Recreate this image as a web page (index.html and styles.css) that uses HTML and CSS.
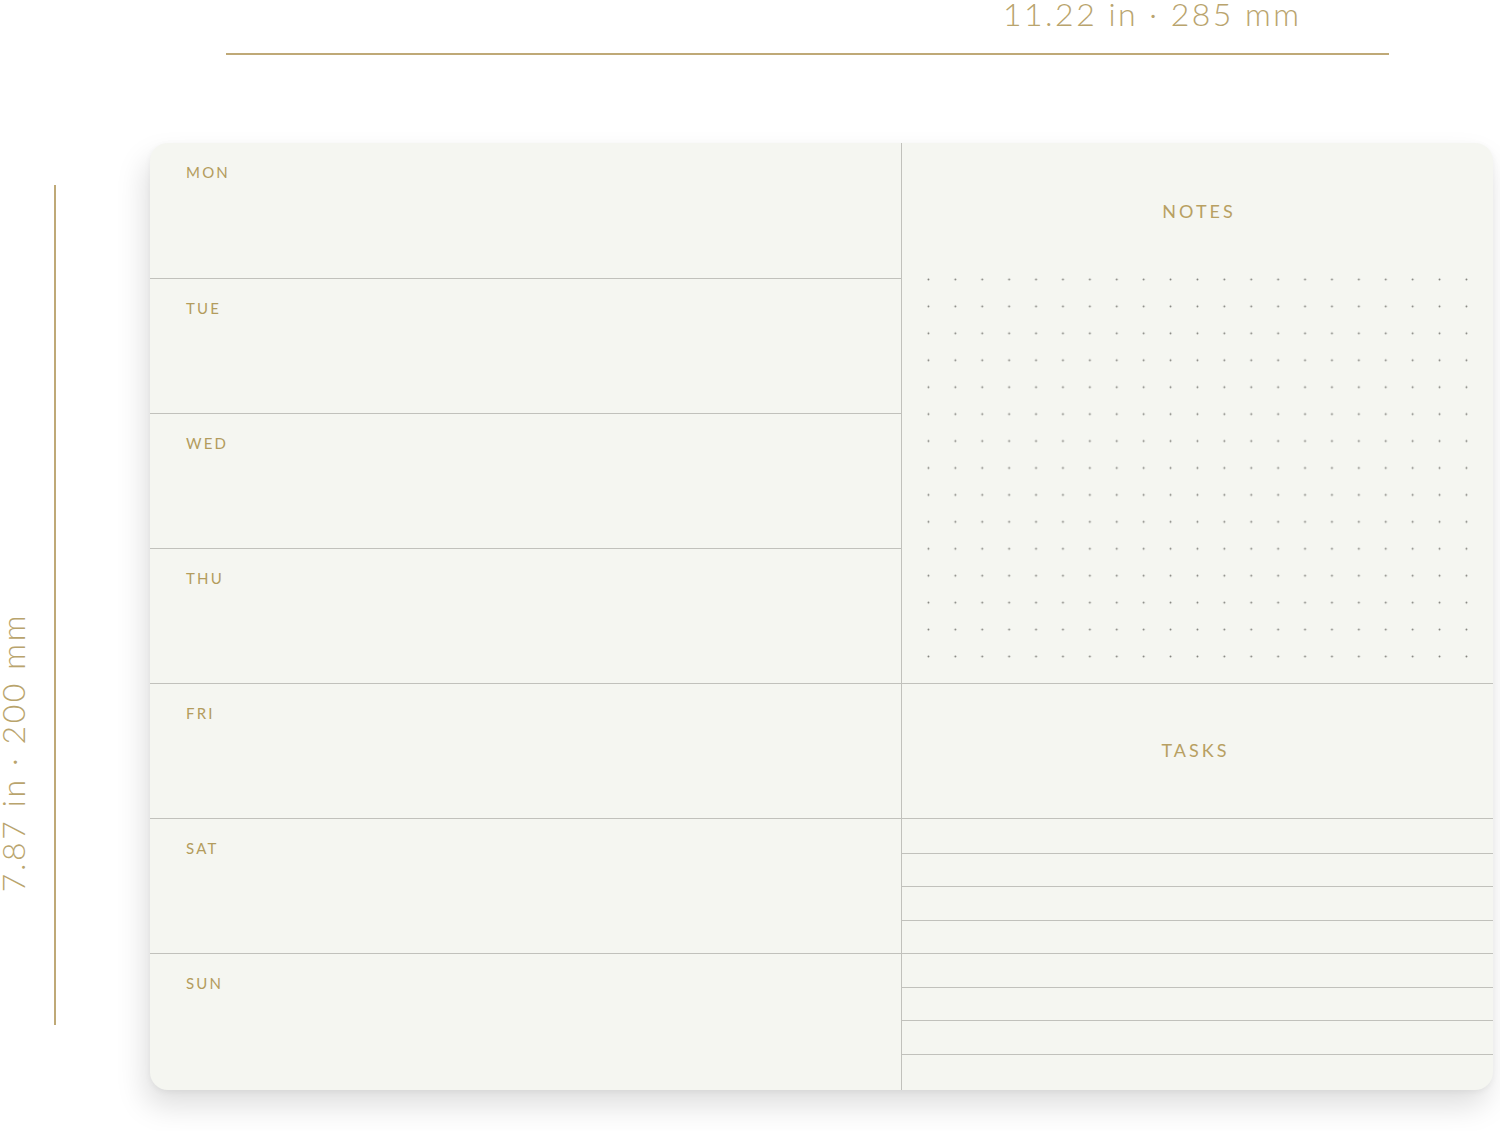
FILE: index.html
```html
<!DOCTYPE html>
<html lang="en">
<head>
<meta charset="utf-8">
<title>Weekly planner</title>
<link rel="stylesheet" href="styles.css">
</head>
<body>
<div class="page">
  <header class="header">
    <div class="dim-top">11.22 in · 285 mm</div>
    <div class="dim-top-line"></div>
  </header>
  <div class="main">
    <div class="side">
      <div class="dim-left">7.87 in · 200 mm</div>
      <div class="dim-left-line"></div>
    </div>
    <div class="card">
      <div class="day r1"><span class="day-label">MON</span></div>
      <div class="day r2"><span class="day-label">TUE</span></div>
      <div class="day r3"><span class="day-label">WED</span></div>
      <div class="day r4"><span class="day-label">THU</span></div>
      <div class="day r5"><span class="day-label">FRI</span></div>
      <div class="day r6"><span class="day-label">SAT</span></div>
      <div class="day r7"><span class="day-label">SUN</span></div>
      <section class="notes">
        <div class="section-label notes-label">NOTES</div>
        <svg class="dots" width="565" height="404" viewBox="0 0 565 404" aria-hidden="true">
          <defs>
            <pattern id="dotgrid" x="0" y="0" width="26.9" height="26.93" patternUnits="userSpaceOnUse">
              <circle cx="13.45" cy="13.46" r="0.95" fill="#7e7e79"/>
            </pattern>
          </defs>
          <rect width="565" height="404" fill="url(#dotgrid)"/>
        </svg>
      </section>
      <section class="tasks-head">
        <div class="section-label tasks-label">TASKS</div>
      </section>
      <section class="tasks-lines">
        <div class="tl"></div><div class="tl"></div><div class="tl"></div><div class="tl"></div>
        <div class="tl"></div><div class="tl"></div><div class="tl"></div><div class="tl"></div>
      </section>
    </div>
  </div>
</div>
</body>
</html>
```
FILE: styles.css
```css
* { box-sizing: border-box; }
html, body { margin: 0; padding: 0; background: #ffffff; }
body { font-family: "Lato", "Open Sans", sans-serif; }

.page {
  width: 1500px;
  height: 1131px;
  overflow: hidden;
  background: #ffffff;
}

.header {
  display: flow-root;
  height: 143px;
}

.dim-top {
  margin: -2px 0 0 1003px;
  font-weight: 300;
  font-size: 32px;
  line-height: 32px;
  letter-spacing: 2.5px;
  color: #b9a46d;
  white-space: nowrap;
}

.dim-top-line {
  margin: 23px 0 0 226px;
  width: 1163px;
  height: 1.5px;
  background: #bfa977;
}

.main {
  display: flex;
  align-items: flex-start;
}

.side {
  flex: none;
  width: 150px;
  display: flex;
  align-items: flex-start;
}

.dim-left {
  writing-mode: vertical-rl;
  transform: rotate(180deg);
  margin: 470px 0 0 -3px;
  font-weight: 300;
  font-size: 32px;
  line-height: 32px;
  letter-spacing: 2.6px;
  color: #b9a46d;
  white-space: nowrap;
}

.dim-left-line {
  margin: 42px 0 0 25px;
  width: 1.5px;
  height: 840px;
  background: #bfa977;
}

.card {
  flex: none;
  width: 1343px;
  height: 947px;
  background: #f5f6f1;
  border-radius: 18px;
  overflow: hidden;
  box-shadow: -5px 16px 30px rgba(0, 0, 0, 0.13), 0 2px 6px rgba(0, 0, 0, 0.05);
  display: grid;
  grid-template-columns: 752px 591px;
  grid-template-rows: repeat(6, 135px) 1fr;
}

.day {
  grid-column: 1;
  border-right: 1px solid #c1c1bc;
  padding: 20px 0 0 36px;
}
.day + .day { border-top: 1px solid #c1c1bc; }
.r1 { grid-row: 1; }
.r2 { grid-row: 2; }
.r3 { grid-row: 3; }
.r4 { grid-row: 4; }
.r5 { grid-row: 5; }
.r6 { grid-row: 6; }
.r7 { grid-row: 7; }

.day-label {
  display: block;
  font-size: 15px;
  line-height: 18px;
  font-weight: 400;
  letter-spacing: 2.2px;
  color: #b39c5d;
}

.section-label {
  text-align: center;
  font-size: 18px;
  line-height: 22px;
  font-weight: 400;
  letter-spacing: 3px;
  color: #b8a062;
}

.notes {
  grid-column: 2;
  grid-row: 1 / 5;
  padding-top: 57px;
}
.notes-label { padding-left: 3px; }

.dots {
  display: block;
  margin: 44px 0 0 13px;
}

.tasks-head {
  grid-column: 2;
  grid-row: 5;
  border-top: 1px solid #c1c1bc;
  padding-top: 55px;
}
.tasks-label { padding-right: 4px; }

.tasks-lines {
  grid-column: 2;
  grid-row: 6 / 8;
  border-top: 1px solid #c1c1bc;
  display: grid;
  grid-template-rows: repeat(7, 33.5px) 1fr;
}
.tl + .tl { border-top: 1px solid #c1c1bc; }
```
